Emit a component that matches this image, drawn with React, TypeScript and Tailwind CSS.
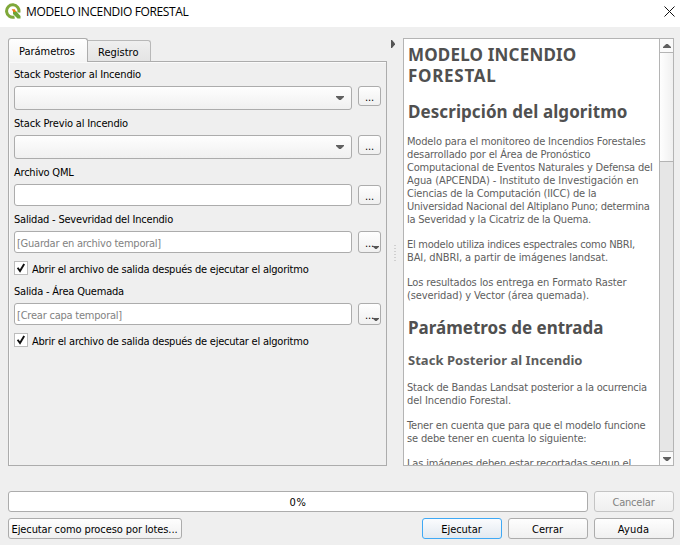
import { useLayoutEffect, useRef, useState } from "react";
import type { ReactNode } from "react";
import clsx from "clsx";

/* One line of text whose tracking is adjusted so that it spans `w` pixels. */
function Line({ w, children, className }: { w: number; children: string; className?: string }) {
  const ref = useRef<HTMLSpanElement>(null);
  const [tracking, setTracking] = useState(0);
  useLayoutEffect(() => {
    const el = ref.current;
    if (!el) return;
    el.style.letterSpacing = "0px";
    const natural = el.getBoundingClientRect().width;
    setTracking((w - natural) / children.length);
    el.style.letterSpacing = `${(w - natural) / children.length}px`;
  }, [w, children]);
  return (
    <div className={clsx("whitespace-nowrap", className)}>
      <span ref={ref} style={{ letterSpacing: `${tracking}px` }}>
        {children}
      </span>
    </div>
  );
}

const face = "border border-[#acacac] bg-linear-to-b from-[#fefefe] to-[#f0f0f0]";
const heading = "pl-px font-['Noto_Sans',sans-serif] font-bold font-stretch-normal";

function Arrow({ className }: { className?: string }) {
  return (
    <svg width="8" height="4" viewBox="0 0 8 4" className={className}>
      <path d="M0 0h8v1L4.8 4H3.2L0 1z" fill="currentColor" />
    </svg>
  );
}

function Dots({ tall, menu, className }: { tall?: boolean; menu?: boolean; className?: string }) {
  return (
    <button className={clsx("relative flex w-[23px] justify-center rounded-[3px] text-black", face, tall ? "h-[22px] pt-[5px]" : "h-5 pt-1", className)}>
      <Line w={9} className="leading-[13px]">...</Line>
      {menu && <Arrow className="absolute right-[1px] bottom-[3px] h-[3px] w-[6px] text-[#555]" />}
    </button>
  );
}

function Combo() {
  return (
    <div className={clsx("flex h-6 w-[338px] items-center justify-end rounded-[3px] pr-[7px]", face)}>
      <Arrow className="text-[#606060]" />
    </div>
  );
}

function Input({ w, text }: { w?: number; text?: string }) {
  return (
    <div className="h-[22px] w-[338px] rounded-[3px] border border-[#acacac] bg-white pt-[5px] pl-[2px] text-[#828282]">
      {text && <Line w={w ?? 0}>{text}</Line>}
    </div>
  );
}

function Check() {
  return (
    <label className="flex h-[14px] items-center gap-[4px]">
      <span className="flex size-[14px] items-center justify-center border border-[#bcbcbc] bg-white">
        <svg width="10" height="10" viewBox="0 0 10 10">
          <path d="M1.6 4.8 4 8 8.2 1" fill="none" stroke="#111" strokeWidth="1.9" />
        </svg>
      </span>
      <Line w={276.5} className="pt-[2px]">Abrir el archivo de salida después de ejecutar el algoritmo</Line>
    </label>
  );
}

function Button({ w, children, className }: { w: number; children: string; className?: string }) {
  return (
    <button className={clsx("flex h-[21px] items-center justify-center rounded-[3px] pt-px pr-px", className)}>
      <Line w={w}>{children}</Line>
    </button>
  );
}

function Row({ children, className }: { children: ReactNode; className?: string }) {
  return <div className={clsx("flex items-start gap-[6px]", className)}>{children}</div>;
}

export default function App() {
  return (
    <div className="flex h-[545px] w-[680px] flex-col overflow-hidden bg-[#efefef] font-['DejaVu_Sans_Condensed','DejaVu_Sans',sans-serif] text-[11px] leading-[13px] font-stretch-condensed text-black">
      <header className="flex h-[27px] shrink-0 items-start justify-between bg-white pr-[5px] pl-[5px]">
        <div className="flex gap-[5px]">
          <svg width="16" height="16" viewBox="0 0 16 16" className="mt-[3px]">
            <path d="M9.5 14A6.2 6.2 0 1 1 13.8 9.5" fill="none" stroke="#7fa83a" strokeWidth="3" />
            <path d="M8 8h3l4.5 5v2.5h-3L8 11z" fill="#6fa537" />
            <path d="M6.6 6.2h3.2L11.2 9H8.6z" fill="#ee7913" />
          </svg>
          <Line w={162.5} className="mt-[3px] font-['Open_Sans',sans-serif] text-[12px] leading-[17px] font-stretch-normal">
            MODELO INCENDIO FORESTAL
          </Line>
        </div>
        <svg width="11" height="11" viewBox="0 0 11 11" className="mt-[6px]">
          <path d="M.5.5l10 10M10.5.5l-10 10" stroke="#111" strokeWidth="1" />
        </svg>
      </header>

      <main className="flex h-[439px] shrink-0 pt-[11px] pl-2">
        <section className="flex w-[379px] flex-col">
          <div className="flex h-[23px] items-end">
            <div className="z-10 -mb-px h-6 w-[80px] rounded-t-[3px] border border-b-0 border-[#acacac] bg-linear-to-b from-[#fefefe] to-[#f4f4f4] pt-[6px] pl-[10px]">
              <Line w={56}>Parámetros</Line>
            </div>
            <div className="h-[21px] w-[63px] rounded-tr-[3px] border border-b-0 border-l-0 border-[#b8b8b8] bg-linear-to-b from-[#efefef] to-[#e4e4e4] pt-[5px] pl-[10px]">
              <Line w={40.5}>Registro</Line>
            </div>
          </div>
          <div className="h-[405px] border border-[#acacac] pt-[6px] pl-[5px] shadow-[inset_1px_1px_0_#fafafa]">
            <Line w={127}>Stack Posterior al Incendio</Line>
            <Row className="mt-[5px]"><Combo /><Dots /></Row>
            <Line w={114} className="mt-[7px]">Stack Previo al Incendio</Line>
            <Row className="mt-[5px]"><Combo /><Dots /></Row>
            <Line w={59.5} className="mt-[7px]">Archivo QML</Line>
            <Row className="mt-[5px]"><Input /><Dots className="mt-px" /></Row>
            <Line w={159} className="mt-[7px]">Salidad - Sevevridad del Incendio</Line>
            <Row className="mt-[5px]"><Input w={144} text="[Guardar en archivo temporal]" /><Dots tall menu /></Row>
            <div className="mt-[8px]"><Check /></div>
            <Line w={110} className="mt-[10px]">Salida - Área Quemada</Line>
            <Row className="mt-[5px]"><Input w={105} text="[Crear capa temporal]" /><Dots tall menu /></Row>
            <div className="mt-[8px]"><Check /></div>
          </div>
        </section>

        <div className="flex w-4 flex-col items-start">
          <svg width="5" height="8" viewBox="0 0 5 8" className="mt-[2px] ml-[4px]">
            <path d="M0 0h1l3 3.5v1L1 8H0z" fill="#555" />
          </svg>
          <svg width="2" height="17" viewBox="0 0 2 17" className="mt-[197px] ml-[7px]">
            <path d="M1 0v17" stroke="#b0b0b0" strokeWidth="1" strokeDasharray="1 2" />
          </svg>
        </div>

        <section className="flex h-[428px] w-[271px] border border-[#b4b4b4] bg-white">
          <article className="h-[426px] w-[255px] overflow-hidden pl-[3px] text-[#606060]">
            <h1 className={clsx(heading, "pt-[5px] text-[17px] leading-[21px] text-[#505050]")}>
              <Line w={168.5}>MODELO INCENDIO</Line>
              <Line w={88.5}>FORESTAL</Line>
            </h1>
            <h2 className={clsx(heading, "mt-[15px] pb-px text-[17px] leading-[21px] text-[#505050]")}>
              <Line w={219.5}>Descripción del algoritmo</Line>
            </h2>
            <div className="mt-[12px]">
              <Line w={238.5}>Modelo para el monitoreo de Incendios Forestales</Line>
              <Line w={183.5}>desarrollado por el Área de Pronóstico</Line>
              <Line w={245.5}>Computacional de Eventos Naturales y Defensa del</Line>
              <Line w={231.5}>Agua (APCENDA) - Instituto de Investigación en</Line>
              <Line w={189.5}>Ciencias de la Computación (IICC) de la</Line>
              <Line w={242.5}>Universidad Nacional del Altiplano Puno; determina</Line>
              <Line w={184}>la Severidad y la Cicatriz de la Quema.</Line>
            </div>
            <div className="mt-[12px]">
              <Line w={228}>El modelo utiliza indices espectrales como NBRI,</Line>
              <Line w={201}>BAI, dNBRI, a partir de imágenes landsat.</Line>
            </div>
            <div className="mt-[12px]">
              <Line w={219.5}>Los resultados los entrega en Formato Raster</Line>
              <Line w={182}>(severidad) y Vector (área quemada).</Line>
            </div>
            <h2 className={clsx(heading, "mt-[15px] pb-px text-[17px] leading-[21px] text-[#505050]")}>
              <Line w={195.5}>Parámetros de entrada</Line>
            </h2>
            <h3 className={clsx(heading, "mt-[13px] pb-px text-[13px] leading-[16px] text-[#5c5c5c]")}>
              <Line w={174.5}>Stack Posterior al Incendio</Line>
            </h3>
            <div className="mt-[12px]">
              <Line w={240}>Stack de Bandas Landsat posterior a la ocurrencia</Line>
              <Line w={104}>del Incendio Forestal.</Line>
            </div>
            <div className="mt-[12px]">
              <Line w={238.5}>Tener en cuenta que para que el modelo funcione</Line>
              <Line w={179.5}>se debe tener en cuenta lo siguiente:</Line>
            </div>
            <div className="mt-[12px]">
              <Line w={224}>Las imágenes deben estar recortadas segun el</Line>
            </div>
          </article>
          <div className="flex w-[14px] flex-col border-l border-[#b4b4b4] bg-[#e6e6e6]">
            <div className="flex h-[14px] items-center justify-center border-b border-[#b4b4b4] bg-[#fafafa]">
              <Arrow className="rotate-180 text-[#606060]" />
            </div>
            <div className="h-[109px] border-b border-[#b4b4b4] bg-linear-to-r from-[#fefefe] to-[#f0f0f0]" />
            <div className="grow" />
            <div className="flex h-[14px] items-center justify-center border-t border-[#b4b4b4] bg-[#fafafa]">
              <Arrow className="text-[#606060]" />
            </div>
          </div>
        </section>
      </main>

      <footer className="flex flex-col gap-[6px] pt-[25px] pl-2">
        <Row>
          <div className="flex h-[21px] w-[580px] items-center justify-center rounded-[3px] border border-[#acacac] bg-white pt-px">
            <Line w={17}>0%</Line>
          </div>
          <Button w={42} className="w-[80px] border border-[#c4c4c4] bg-linear-to-b from-[#f9f9f9] to-[#efefef] text-[#828282]">Cancelar</Button>
        </Row>
        <Row>
          <Button w={166} className={clsx("mr-[234px] w-[174px]", face)}>Ejecutar como proceso por lotes...</Button>
          <Button w={40.5} className="w-[80px] border border-[#3fa9f5] bg-linear-to-b from-[#fbfcfe] to-[#e2e9f0]">Ejecutar</Button>
          <Button w={31} className={clsx("w-[80px]", face)}>Cerrar</Button>
          <Button w={31.5} className={clsx("w-[80px]", face)}>Ayuda</Button>
        </Row>
      </footer>
    </div>
  );
}
